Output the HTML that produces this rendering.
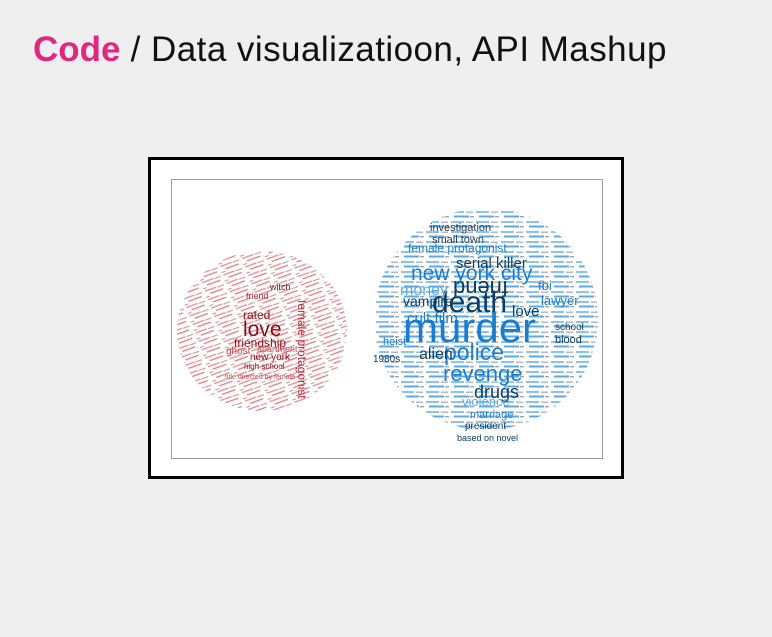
<!DOCTYPE html>
<html><head><meta charset="utf-8"><style>
body{margin:0;width:772px;height:637px;background:#efefef;overflow:hidden;font-family:"Liberation Sans",sans-serif}
.t{position:absolute;left:33px;top:30px;font-size:35px;color:#111;white-space:nowrap;letter-spacing:0.45px}
.t b{color:#e0287f;letter-spacing:0}
.f{position:absolute;left:148px;top:157px;width:470px;height:316px;border:3px solid #000;background:#fff}
.i{position:absolute;left:171px;top:179px;width:430px;height:278px;border:1px solid #999;background:#fff}
</style></head><body>
<div class="t"><b>Code</b> / Data visualizatioon, API Mashup</div>
<div class="f"></div>
<div class="i"></div>
<svg style="position:absolute;left:0;top:0" width="772" height="637" font-family="Liberation Sans, sans-serif">
<defs>
<pattern id="pr" width="23" height="9" patternUnits="userSpaceOnUse" patternTransform="rotate(-20)"><rect width="23" height="9" fill="#fff"/><rect x="1" y="1" width="12" height="1.5" fill="#ec9a9e"/><rect x="14" y="1.5" width="7" height="1.2" fill="#c9a3a3"/><rect x="5" y="5" width="14" height="1.3" fill="#e47c84"/><rect x="0" y="7.5" width="4" height="1" fill="#b99"/></pattern>
<pattern id="pb" width="25" height="10" patternUnits="userSpaceOnUse"><rect width="25" height="10" fill="#fff"/><rect x="1" y="1" width="13" height="2" fill="#8cc3ec"/><rect x="16" y="1.5" width="7" height="1.5" fill="#b0bac4"/><rect x="4" y="5.5" width="15" height="2" fill="#5ea8e4"/><rect x="20" y="6" width="4" height="1.4" fill="#9aa6b2"/></pattern>
</defs>
<ellipse cx="262" cy="331" rx="85" ry="80" fill="url(#pr)"/>
<ellipse cx="486" cy="319" rx="112" ry="111" fill="url(#pb)"/>
<g fill="#8b0d18">
<text x="243" y="336" font-size="21">love</text>
<text x="243" y="319" font-size="12">rated</text>
<text x="234" y="347" font-size="12">friendship</text>
<text x="250" y="360" font-size="10">new york</text>
<text x="244" y="369" font-size="8">high school</text>
<text x="226" y="354" font-size="10" fill="#e04050">ghost</text>
<text x="257" y="352" font-size="9" fill="#c05060">apartment</text>
<text x="225" y="379" font-size="7" fill="#c05060">title directed by female</text>
<text x="298" y="300" font-size="12" fill="#b03040" transform="rotate(90 298 300)">female protagonist</text>
<text x="270" y="290" font-size="9" fill="#6a2020">witch</text>
<text x="246" y="299" font-size="9" fill="#b03040">friend</text>
</g>
<g fill="#1a7dd0">
<text x="403" y="342" font-size="42">murder</text>
<text x="432" y="312" font-size="30" fill="#0c3d62">death</text>
<text x="452" y="295" font-size="22" fill="#0c3d62" transform="rotate(180 480 288)">friend</text>
<text x="411" y="280" font-size="21">new york city</text>
<text x="444" y="360" font-size="23">police</text>
<text x="419" y="359" font-size="16" fill="#0c3d62">alien</text>
<text x="443" y="381" font-size="22">revenge</text>
<text x="474" y="398" font-size="18" fill="#0c3d62">drugs</text>
<text x="456" y="268" font-size="15" fill="#1f3c55">serial killer</text>
<text x="403" y="306" font-size="14" fill="#0c3d62">vampire</text>
<text x="407" y="323" font-size="15">cult film</text>
<text x="400" y="295" font-size="16" fill="#63a9e6">money</text>
<text x="408" y="252" font-size="12">female protagonist</text>
<text x="432" y="243" font-size="11" fill="#1f3c55">small town</text>
<text x="430" y="231" font-size="11" fill="#1f3c55">investigation</text>
<text x="541" y="305" font-size="13">lawyer</text>
<text x="512" y="316" font-size="15" fill="#0c3d62">love</text>
<text x="555" y="343" font-size="11" fill="#0c3d62">blood</text>
<text x="462" y="406" font-size="13" fill="#63a9e6">violence</text>
<text x="470" y="418" font-size="11">marriage</text>
<text x="465" y="429" font-size="10" fill="#0c3d62">president</text>
<text x="457" y="441" font-size="9" fill="#0c3d62">based on novel</text>
<text x="538" y="290" font-size="13" fill="#1a7dd0">fbi</text>
<text x="555" y="330" font-size="10" fill="#0c3d62">school</text>
<text x="383" y="345" font-size="11" fill="#1a7dd0">heist</text>
<text x="373" y="362" font-size="10" fill="#0c3d62">1980s</text>
</g>
</svg>
</body></html>
